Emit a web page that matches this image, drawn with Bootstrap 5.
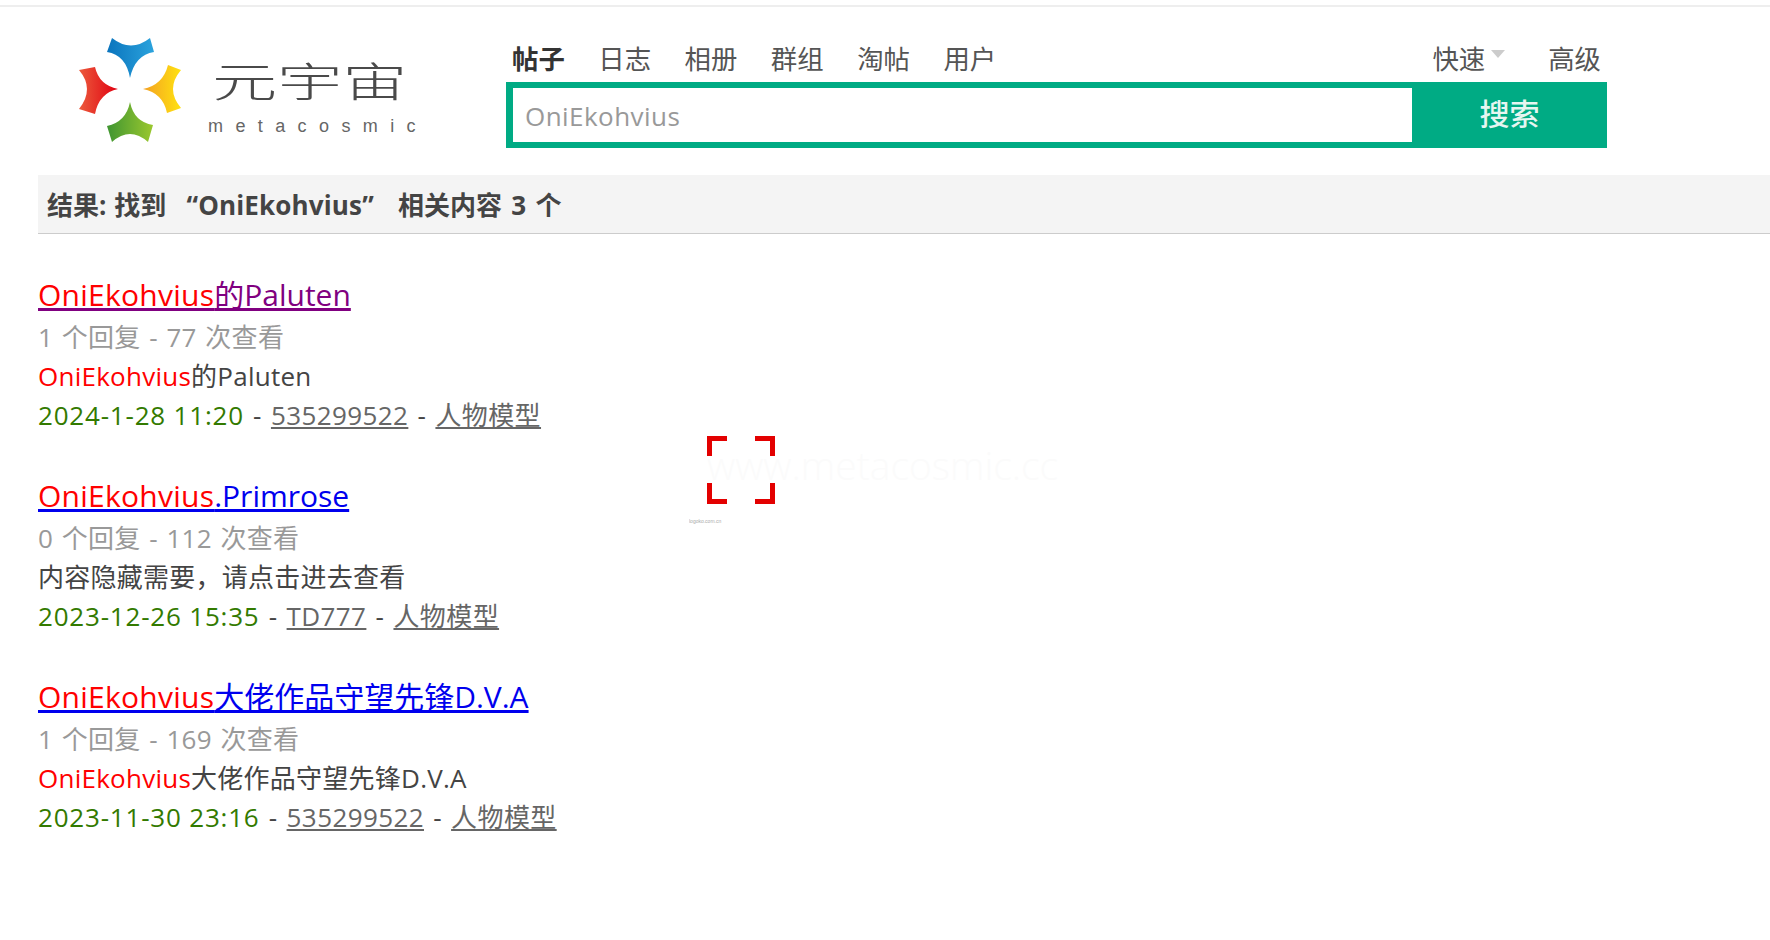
<!DOCTYPE html>
<html lang="zh-CN">
<head>
  <meta charset="utf-8">
  <title>元宇宙 - 搜索</title>
  <link href="https://cdn.jsdelivr.net/npm/bootstrap@5.3.3/dist/css/bootstrap.min.css" rel="stylesheet">
  <style>
    body { font-family: "Open Sans", "Noto Sans CJK SC", sans-serif; color: #444; background: #fff; position: relative; min-height: 940px; overflow: hidden; }
    .top-line { margin-top: 5px; height: 2px; background: #eee; }
    .site-head { height: 168px; }
    .logo-box { width: 506px; flex: none; }
    .logo-box svg { display: block; }
    .search-side { width: 1101px; flex: none; }
    .tab-row { height: 75px; padding: 34px 6px 0; font-size: 26.4px; line-height: 36px; }
    .tab-row a { color: #555; text-decoration: none; margin-right: 33.500px; }
    .tab-row a.on { color: #333; font-weight: 700; }
    .tab-adv { margin-left: 9.500px; margin-right: 0 !important; }
    .quick-caret { display: inline-block; border: 7px solid transparent; border-top: 8px solid #ccc; border-bottom: 0; vertical-align: 11px; margin-left: 6px; }
    .search-bar { background: #00ab84; height: 66px; padding: 6px 0 6px 7px; }
    .search-input { flex: 1; border: 0; outline: 0; height: 54px; padding: 2px 12px 0; font-size: 26px; letter-spacing: .45px; color: #999; background: #fff; }
    .search-btn { width: 195px; border: 0; background: transparent; color: #e6f6f1; font-size: 30px; font-weight: 500; line-height: 52px; height: 52px; padding: 0; }
    .result-bar { margin-left: 38px; height: 59px; padding: 1px 9px 0; background: #f4f4f4; border-bottom: 1px solid #ccc; font-size: 26px; font-weight: 700; color: #444; line-height: 59px; word-spacing: 1px; }
    .bar-term { margin-left: 12.500px; letter-spacing: .15px; }
    .bar-tail { margin-left: 16.500px; word-spacing: 2.500px; }
    .result-list { margin: 37px 0 0 38px; padding: 0; list-style: none; }
    .result-item { height: 201px; font-size: 26px; line-height: 39px; letter-spacing: .25px; word-spacing: 1.500px; }
    .item-title { font-size: 30px; line-height: 47px; letter-spacing: 0; word-spacing: 0; }
    .item-title .hit { letter-spacing: .25px; }
    .item-title a { color: #0000ee; }
    .item-title a.seen { color: #800080; }
    .hit { color: #f00; }
    .item-meta { color: #999; letter-spacing: .3px; }
    .item-foot { letter-spacing: .4px; word-spacing: 2px; }
    .item-foot a { color: #666; }
    .item-date { color: #337a00; letter-spacing: .8px; word-spacing: 0; }
    .mark-overlay { position: absolute; left: 689px; top: 436px; width: 380px; height: 95px; }
  </style>
</head>
<body>
  <div class="top-line"></div>

  <header class="site-head d-flex">
    <div class="logo-box">
      <svg width="506" height="168" viewBox="0 0 506 168">
        <defs>
          <linearGradient id="gBlue" x1="0" x2="1"><stop offset="0" stop-color="#0a74bd"/><stop offset="1" stop-color="#2ba3dd"/></linearGradient>
          <linearGradient id="gRed" x1="0" x2="1"><stop offset="0" stop-color="#ec5a3c"/><stop offset="1" stop-color="#e00010"/></linearGradient>
          <linearGradient id="gYellow" x1="0" x2="1"><stop offset="0" stop-color="#f3a023"/><stop offset="1" stop-color="#ffe210"/></linearGradient>
          <linearGradient id="gGreen" x1="0" x2="1"><stop offset="0" stop-color="#3f9531"/><stop offset="1" stop-color="#9bc82f"/></linearGradient>
        </defs>
        <!-- y is offset by 7 for the top line -->
        <g transform="translate(0,-7)">
          <path fill="url(#gBlue)" d="M112 38Q131 53 150 38L154 52Q135 55 130 78Q126 55 107 52Z"/>
          <path fill="url(#gRed)" d="M79 70L95 67Q99 85 118 89Q99 93 95 114L79 109Q95 89 79 70Z"/>
          <path fill="url(#gYellow)" d="M143 89Q163 85 168 65L181 70Q165 89 181 108L167 113Q163 93 143 89Z"/>
          <path fill="url(#gGreen)" d="M130 102Q134 122 153 125L148 142Q130 126 112 142L107 126Q126 122 130 102Z"/>
          <text transform="translate(212,97) scale(1.59,1)" font-size="41" font-weight="300" fill="#4a4a4a" font-family="'Noto Sans CJK SC', sans-serif">元宇宙</text>
          <text x="208" y="132" font-size="18" fill="#666" letter-spacing="12.4" font-family="'Liberation Sans', sans-serif">metacosmic</text>
        </g>
      </svg>
    </div>
    <div class="search-side">
      <nav class="tab-row d-flex">
        <a class="on" href="#">帖子</a>
        <a href="#">日志</a>
        <a href="#">相册</a>
        <a href="#">群组</a>
        <a href="#">淘帖</a>
        <a href="#">用户</a>
        <a class="ms-auto" href="#">快速<span class="quick-caret"></span></a>
        <a class="tab-adv" href="#">高级</a>
      </nav>
      <form class="search-bar d-flex">
        <input class="search-input" type="text" value="OniEkohvius">
        <button class="search-btn" type="button">搜索</button>
      </form>
    </div>
  </header>

  <div class="result-bar">结果: 找到 <span class="bar-term">“OniEkohvius”</span> <span class="bar-tail">相关内容 3 个</span></div>

  <ul class="result-list">
    <li class="result-item">
      <div class="item-title"><a class="seen" href="#"><span class="hit">OniEkohvius</span>的Paluten</a></div>
      <div class="item-meta">1 个回复 - 77 次查看</div>
      <div><span class="hit">OniEkohvius</span>的Paluten</div>
      <div class="item-foot"><span class="item-date">2024-1-28 11:20</span> - <a href="#">535299522</a> - <a href="#">人物模型</a></div>
    </li>
    <li class="result-item">
      <div class="item-title"><a href="#"><span class="hit">OniEkohvius</span>.Primrose</a></div>
      <div class="item-meta">0 个回复 - 112 次查看</div>
      <div>内容隐藏需要，请点击进去查看</div>
      <div class="item-foot"><span class="item-date">2023-12-26 15:35</span> - <a href="#">TD777</a> - <a href="#">人物模型</a></div>
    </li>
    <li class="result-item">
      <div class="item-title"><a href="#"><span class="hit">OniEkohvius</span>大佬作品守望先锋D.V.A</a></div>
      <div class="item-meta">1 个回复 - 169 次查看</div>
      <div><span class="hit">OniEkohvius</span>大佬作品守望先锋D.V.A</div>
      <div class="item-foot"><span class="item-date">2023-11-30 23:16</span> - <a href="#">535299522</a> - <a href="#">人物模型</a></div>
    </li>
  </ul>

  <svg class="mark-overlay" viewBox="0 0 380 95">
    <text x="18" y="44" font-size="39" font-weight="300" fill="#fbfbfb" font-family="'Open Sans', sans-serif">www.metacosmic.cc</text>
    <path fill="none" stroke="#e30000" stroke-width="5" d="M20.500 20V2.500H38M66 2.500H83.500V20M20.500 47V65.500H38M66 65.500H83.500V47"/>
    <text x="0" y="87" font-size="5" fill="#aaa" font-family="'Liberation Sans', sans-serif">logoko.com.cn</text>
  </svg>
</body>
</html>
